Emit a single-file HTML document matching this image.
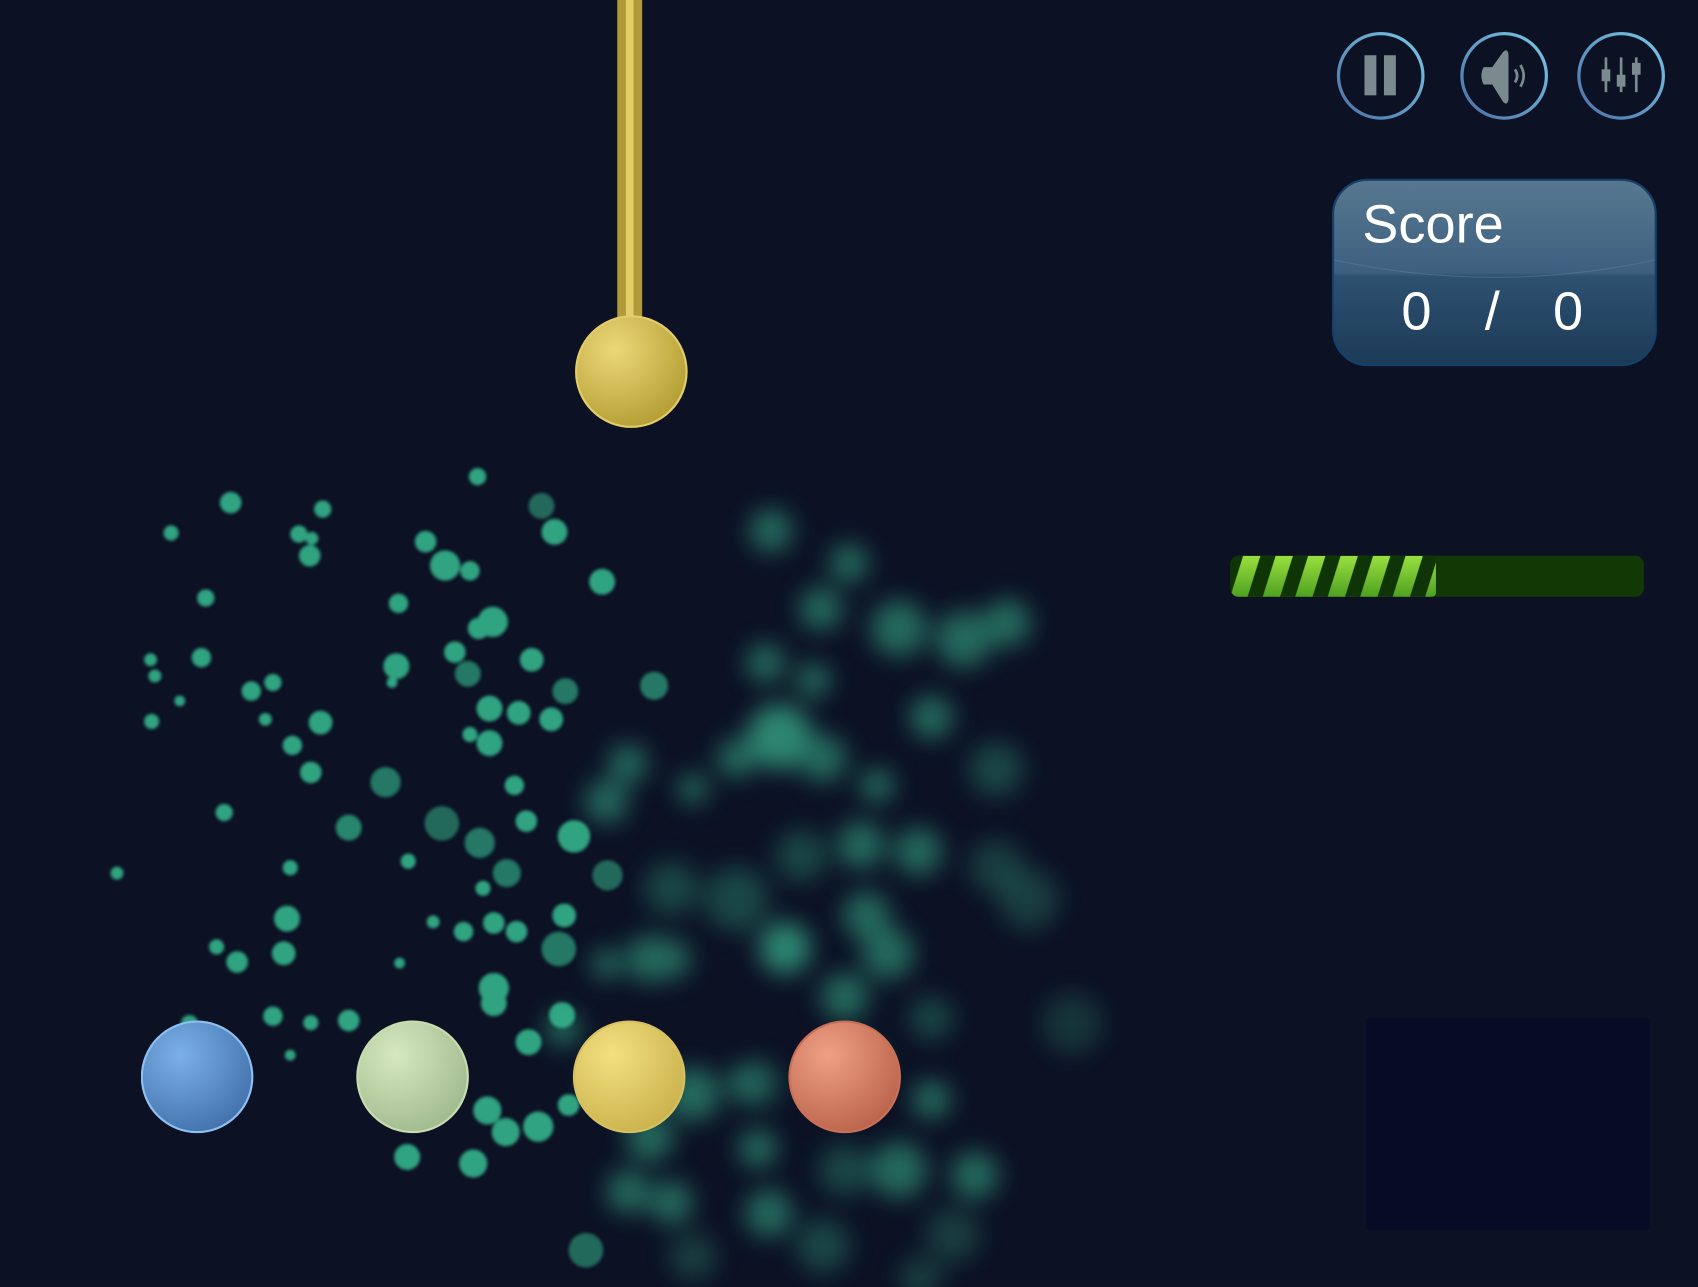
<!DOCTYPE html>
<html><head><meta charset="utf-8"><style>
html,body{margin:0;padding:0;background:#0c1124;overflow:hidden}
svg{display:block}
</style></head><body>
<svg width="1698" height="1287" viewBox="0 0 1568 1188" preserveAspectRatio="none" xmlns="http://www.w3.org/2000/svg">
<defs>
<filter id="b1" x="-50%" y="-50%" width="200%" height="200%"><feGaussianBlur stdDeviation="1.5"/></filter>
<filter id="b2" x="-100%" y="-100%" width="300%" height="300%"><feGaussianBlur stdDeviation="11"/></filter>
<linearGradient id="ring" x1="1" y1="0" x2="0" y2="1"><stop offset="0" stop-color="#79c9e6"/><stop offset="1" stop-color="#4c6fa6"/></linearGradient>
<linearGradient id="score" x1="0" y1="0" x2="0" y2="1"><stop offset="0" stop-color="#57788f"/><stop offset="0.5" stop-color="#3e6080"/><stop offset="0.52" stop-color="#2e5170"/><stop offset="1" stop-color="#1b3a57"/></linearGradient>
<radialGradient id="gY" cx="0.35" cy="0.3" r="0.8"><stop offset="0" stop-color="#ecd878"/><stop offset="1" stop-color="#b09a30"/></radialGradient>
<radialGradient id="gB" cx="0.35" cy="0.3" r="0.8"><stop offset="0" stop-color="#7cb0e8"/><stop offset="1" stop-color="#3f6ea8"/></radialGradient>
<radialGradient id="gG" cx="0.35" cy="0.3" r="0.8"><stop offset="0" stop-color="#d6e8c0"/><stop offset="1" stop-color="#9db88a"/></radialGradient>
<radialGradient id="gY2" cx="0.35" cy="0.3" r="0.8"><stop offset="0" stop-color="#f3e080"/><stop offset="1" stop-color="#c8b04a"/></radialGradient>
<radialGradient id="gO" cx="0.35" cy="0.3" r="0.8"><stop offset="0" stop-color="#eea084"/><stop offset="1" stop-color="#b86048"/></radialGradient>
<linearGradient id="stripe" x1="0" y1="0" x2="0" y2="1"><stop offset="0" stop-color="#9ae040"/><stop offset="1" stop-color="#4ea020"/></linearGradient>
<pattern id="str" width="30" height="38" patternUnits="userSpaceOnUse" x="1136" y="513"><rect width="30" height="38" fill="#0f3506"/><polygon points="12,0 28,0 16,38 0,38" fill="url(#stripe)"/><polygon points="42,0 58,0 46,38 30,38" fill="url(#stripe)"/></pattern>
<clipPath id="barclip"><rect x="1136" y="513" width="382" height="38" rx="8"/></clipPath>
</defs>
<rect width="1568" height="1188" fill="#0c1124"/>

<g fill="#2f8f74" opacity="0.7" filter="url(#b2)">
<circle cx="712" cy="490" r="20"/><circle cx="784" cy="520" r="18"/><circle cx="758" cy="562" r="20"/><circle cx="830" cy="580" r="26"/><circle cx="890" cy="590" r="26"/><circle cx="930" cy="575" r="22"/><circle cx="707" cy="612" r="18"/><circle cx="751" cy="628" r="16"/><circle cx="860" cy="662" r="20"/><circle cx="720" cy="680" r="30" fill="#3ab893"/><circle cx="760" cy="700" r="22"/><circle cx="680" cy="700" r="18"/><circle cx="640" cy="728" r="14"/><circle cx="810" cy="725" r="16"/><circle cx="920" cy="710" r="25" opacity="0.6"/><circle cx="580" cy="705" r="18"/><circle cx="560" cy="740" r="20"/><circle cx="795" cy="780" r="22"/><circle cx="848" cy="786" r="22"/><circle cx="920" cy="800" r="25" opacity="0.5"/><circle cx="950" cy="830" r="28" opacity="0.5"/><circle cx="740" cy="790" r="24" opacity="0.6"/><circle cx="680" cy="830" r="30" opacity="0.6"/><circle cx="620" cy="820" r="25" opacity="0.6"/><circle cx="800" cy="845" r="22"/><circle cx="820" cy="880" r="24"/><circle cx="725" cy="875" r="24" fill="#3ab893"/><circle cx="600" cy="885" r="22"/><circle cx="620" cy="885" r="18"/><circle cx="560" cy="890" r="14"/><circle cx="780" cy="920" r="22"/><circle cx="860" cy="940" r="20" opacity="0.6"/><circle cx="990" cy="945" r="28" opacity="0.4"/><circle cx="700" cy="1000" r="22" opacity="0.6"/><circle cx="640" cy="1010" r="25"/><circle cx="600" cy="1050" r="22"/><circle cx="580" cy="1100" r="20"/><circle cx="620" cy="1110" r="20"/><circle cx="700" cy="1060" r="18"/><circle cx="780" cy="1080" r="24" opacity="0.6"/><circle cx="830" cy="1080" r="26"/><circle cx="900" cy="1085" r="22"/><circle cx="860" cy="1015" r="18"/><circle cx="710" cy="1120" r="22"/><circle cx="760" cy="1150" r="25" opacity="0.6"/><circle cx="880" cy="1140" r="25" opacity="0.5"/><circle cx="640" cy="1160" r="22" opacity="0.5"/><circle cx="800" cy="980" r="18" opacity="0.6"/><circle cx="560" cy="1000" r="18"/><circle cx="850" cy="1180" r="20" opacity="0.5"/><circle cx="690" cy="1000" r="18"/><circle cx="520" cy="950" r="16"/>
</g>

<g fill="#35b58c" filter="url(#b1)" opacity="0.9">
<circle cx="213" cy="464" r="10"/><circle cx="298" cy="470" r="8"/><circle cx="158" cy="492" r="7"/><circle cx="276" cy="493" r="8"/><circle cx="288" cy="497" r="6"/><circle cx="286" cy="513" r="10"/><circle cx="441" cy="440" r="8"/><circle cx="500" cy="467" r="12" opacity="0.6"/><circle cx="512" cy="491" r="12"/><circle cx="393" cy="500" r="10"/><circle cx="411" cy="522" r="14"/><circle cx="434" cy="527" r="9"/><circle cx="556" cy="537" r="12"/><circle cx="190" cy="552" r="8"/><circle cx="368" cy="557" r="9"/><circle cx="455" cy="574" r="14"/><circle cx="442" cy="580" r="10"/><circle cx="139" cy="609" r="6"/><circle cx="143" cy="624" r="6"/><circle cx="186" cy="607" r="9"/><circle cx="232" cy="638" r="9"/><circle cx="252" cy="630" r="8"/><circle cx="166" cy="647" r="5"/><circle cx="366" cy="615" r="12"/><circle cx="420" cy="602" r="10"/><circle cx="432" cy="622" r="12" opacity="0.7"/><circle cx="491" cy="609" r="11"/><circle cx="362" cy="630" r="5"/><circle cx="522" cy="638" r="12" opacity="0.7"/><circle cx="604" cy="633" r="13" opacity="0.7"/><circle cx="140" cy="666" r="7"/><circle cx="245" cy="664" r="6"/><circle cx="296" cy="667" r="11"/><circle cx="270" cy="688" r="9"/><circle cx="452" cy="654" r="12"/><circle cx="479" cy="658" r="11"/><circle cx="509" cy="664" r="11"/><circle cx="434" cy="678" r="7"/><circle cx="452" cy="686" r="12"/><circle cx="287" cy="713" r="10"/><circle cx="356" cy="722" r="14" opacity="0.7"/><circle cx="475" cy="725" r="9"/><circle cx="207" cy="750" r="8"/><circle cx="408" cy="760" r="16" opacity="0.6"/><circle cx="322" cy="764" r="12" opacity="0.8"/><circle cx="486" cy="758" r="10"/><circle cx="443" cy="778" r="14" opacity="0.7"/><circle cx="530" cy="772" r="15"/><circle cx="108" cy="806" r="6"/><circle cx="268" cy="801" r="7"/><circle cx="377" cy="795" r="7"/><circle cx="468" cy="806" r="13" opacity="0.7"/><circle cx="446" cy="820" r="7"/><circle cx="561" cy="808" r="14" opacity="0.6"/><circle cx="400" cy="851" r="6"/><circle cx="265" cy="848" r="12"/><circle cx="521" cy="845" r="11"/><circle cx="456" cy="852" r="10"/><circle cx="428" cy="860" r="9"/><circle cx="477" cy="860" r="10"/><circle cx="200" cy="874" r="7"/><circle cx="219" cy="888" r="10"/><circle cx="262" cy="880" r="11"/><circle cx="369" cy="889" r="5"/><circle cx="516" cy="876" r="16" opacity="0.7"/><circle cx="456" cy="912" r="14"/><circle cx="456" cy="926" r="12"/><circle cx="252" cy="938" r="9"/><circle cx="287" cy="944" r="7"/><circle cx="322" cy="942" r="10"/><circle cx="519" cy="937" r="12"/><circle cx="268" cy="974" r="5"/><circle cx="488" cy="962" r="12"/><circle cx="450" cy="1025" r="13"/><circle cx="467" cy="1045" r="13"/><circle cx="497" cy="1040" r="14"/><circle cx="376" cy="1068" r="12"/><circle cx="437" cy="1074" r="13"/><circle cx="525" cy="1020" r="10"/><circle cx="541" cy="1154" r="16" opacity="0.6"/><circle cx="175" cy="945" r="8"/>
</g>

<!-- rod and ball -->
<rect x="570" y="0" width="23" height="300" fill="#b09a3a"/>
<rect x="578" y="0" width="7" height="300" fill="#e3cf6a"/>
<circle cx="583" cy="343" r="51" fill="url(#gY)" stroke="#e2cd6a" stroke-width="2"/>

<!-- bottom balls -->
<circle cx="182" cy="994" r="51" fill="url(#gB)" stroke="#8fbff0" stroke-width="2"/>
<circle cx="381" cy="994" r="51" fill="url(#gG)" stroke="#c8dcb0" stroke-width="2"/>
<circle cx="581" cy="994" r="51" fill="url(#gY2)" stroke="#d6c064" stroke-width="2"/>
<circle cx="780" cy="994" r="51" fill="url(#gO)" stroke="#c87058" stroke-width="2"/>

<!-- buttons -->
<g fill="none" stroke="url(#ring)" stroke-width="3">
<circle cx="1275" cy="70" r="39"/><circle cx="1389" cy="70" r="39"/><circle cx="1497" cy="70" r="39"/>
</g>
<g fill="#7a8a8e">
<rect x="1260" y="51" width="11" height="37"/><rect x="1278" y="51" width="11" height="37"/>
<path d="M1370 62 Q1366 70 1370 78 L1378 78 L1388 94 Q1392 98 1393 92 L1393 50 Q1392 44 1388 48 L1378 62 Z"/>
</g>
<g fill="none" stroke="#7a8a8e" stroke-width="2.5">
<path d="M1399 64 Q1403 70 1399 76"/><path d="M1404 60 Q1410 70 1404 80"/>
<path d="M1483 53 V85 M1497 53 V85 M1511 53 V85"/>
</g>
<g fill="#7a8a8e"><rect x="1479" y="64" width="8" height="11"/><rect x="1493" y="69" width="8" height="11"/><rect x="1507" y="58" width="8" height="11"/></g>

<!-- score -->
<rect x="1231" y="166" width="298" height="171" rx="32" fill="url(#score)" stroke="#16406a" stroke-width="2"/>
<path d="M1232 240 Q1380 272 1528 240" fill="none" stroke="#6a8aa2" stroke-width="1" opacity="0.4"/>
<text x="1258" y="224" font-family="Liberation Sans, sans-serif" font-size="50" fill="#fff">Score</text>
<g font-family="Liberation Sans, sans-serif" font-size="50" fill="#fff" text-anchor="middle">
<text x="1308" y="304">0</text><text x="1378" y="304">/</text><text x="1448" y="304">0</text>
</g>

<!-- progress -->
<rect x="1136" y="513" width="382" height="38" rx="8" fill="#123806"/>
<g clip-path="url(#barclip)"><rect x="1136" y="513" width="190" height="38" fill="url(#str)" rx="4"/></g>

<!-- dark box -->
<rect x="1262" y="940" width="261" height="195" fill="#070b25"/>
</svg>
</body></html>
